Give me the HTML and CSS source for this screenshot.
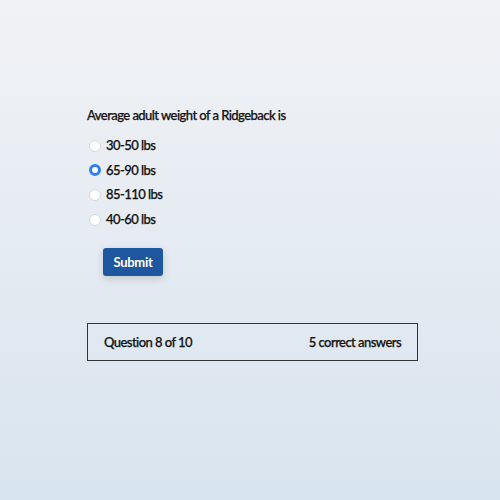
FILE: index.html
```html
<!DOCTYPE html>
<html>
<head>
<meta charset="utf-8">
<link rel="stylesheet" href="styles.css">
</head>
<body>
<main class="quiz">
  <p class="question">Average adult weight of a Ridgeback is</p>
  <form class="options">
    <label class="option"><input type="radio" name="w"> <span>30-50 lbs</span></label>
    <label class="option"><input type="radio" name="w" checked> <span>65-90 lbs</span></label>
    <label class="option"><input type="radio" name="w"> <span>85-110 lbs</span></label>
    <label class="option"><input type="radio" name="w"> <span>40-60 lbs</span></label>
    <button type="button" class="submit">Submit</button>
  </form>
  <div class="status">
    <span>Question 8 of 10</span>
    <span>5 correct answers</span>
  </div>
</main>
</body>
</html>
```
FILE: styles.css
```css
html, body {
  margin: 0;
  height: 100%;
}
body {
  background: linear-gradient(180deg, #f1f2f5 0%, #d8e4ef 100%);
  font-family: Lato, "Open Sans", sans-serif;
  color: #111;
  font-size: 13px;
  font-weight: 500;
  letter-spacing: -0.55px;
  -webkit-text-stroke: 0.25px currentColor;
}
.quiz {
  padding: 106px 82px 0 87px;
}
.question {
  margin: 0 0 9px;
  line-height: 18px;
}
.options {
  display: flex;
  flex-direction: column;
}
.option {
  display: flex;
  align-items: center;
  height: 24.6px;
}
.option input {
  appearance: none;
  -webkit-appearance: none;
  box-sizing: border-box;
  width: 12px;
  height: 12px;
  margin: 1px 5px 0 2px;
  border: 1px solid #d4d8de;
  border-radius: 50%;
  background: #fff;
}
.option input:checked {
  border: 3.5px solid #2f80ed;
  background: #fff;
}
.submit {
  align-self: flex-start;
  margin: 17px 0 0 16px;
  width: 60px;
  height: 28px;
  background: #1f56a0;
  color: #fff;
  border: none;
  border-radius: 3px;
  font-family: Lato, sans-serif;
  font-weight: 700;
  font-size: 13px;
  letter-spacing: -0.3px;
  -webkit-text-stroke: 0;
  box-shadow: 0 3px 8px rgba(0, 0, 0, 0.15);
}
.status {
  margin-top: 47px;
  border: 1px solid #333;
  height: 36px;
  display: flex;
  align-items: center;
  justify-content: space-between;
  padding: 0 16px;
}
```
